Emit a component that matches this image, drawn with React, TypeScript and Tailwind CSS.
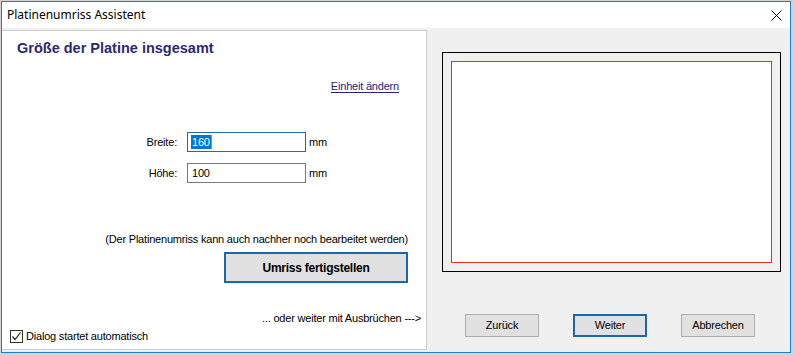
export default function App() {
  return (
    <div className="h-[356px] w-[795px] bg-[#d3d3d3] pl-[1px] pt-[1px] font-['Liberation_Sans',Arial,sans-serif] text-[11px] tracking-[-0.2px] text-black">
      <div className="flex h-[352px] w-[790px] flex-col border border-[#1a7fd0] bg-[#f0f0f0]">
        {/* title bar */}
        <div className="flex h-[26px] items-center justify-between bg-white pl-[5px] pr-[8px]">
          <span className="font-['Noto_Sans',sans-serif] text-[12px] tracking-normal">Platinenumriss Assistent</span>
          <svg width="11" height="11" viewBox="0 0 11 11" className="text-black">
            <path d="M0.5 0.5 L10.5 10.5 M10.5 0.5 L0.5 10.5" stroke="currentColor" strokeWidth="1" />
          </svg>
        </div>

        <div className="flex flex-1 py-[2px]">
          {/* left panel */}
          <div className="flex w-[425px] flex-col border-y border-r border-[#cdcdcd] bg-white">
            <h1 className="ml-[15px] mt-[9px] h-[16px] text-[14.5px] font-bold leading-[16px] tracking-normal text-[#2b2a70]">
              Größe der Platine insgesamt
            </h1>
            <a className="mr-[27px] mt-[24px] self-end leading-[13px] text-[#24247a] underline underline-offset-[2px]">
              Einheit ändern
            </a>

            <div className="mt-[39px] flex items-center">
              <span className="w-[175px] text-right">Breite:</span>
              <div className="ml-[10px] flex h-[20px] w-[119px] items-center border border-[#1f6dab] bg-white pl-[3px]">
                <span className="bg-[#0078d7] px-[1px] leading-[14px] text-white">160</span>
                <span className="h-[14px] w-[1px] bg-[#e8771e]" />
              </div>
              <span className="ml-[3px]">mm</span>
            </div>
            <div className="mt-[11px] flex items-center">
              <span className="w-[175px] text-right">Höhe:</span>
              <div className="ml-[10px] flex h-[20px] w-[119px] items-center border border-[#7a7a7a] bg-white pl-[3px]">
                <span className="px-[1px] leading-[14px]">100</span>
              </div>
              <span className="ml-[3px]">mm</span>
            </div>

            <p className="mr-[18px] mt-[50px] self-end leading-[13px]">
              (Der Platinenumriss kann auch nachher noch bearbeitet werden)
            </p>
            <button className="mr-[18px] mt-[6px] flex h-[31px] w-[184px] items-center justify-center self-end border-2 border-[#1a68a8] bg-[#e1e1e1] text-[12px] font-bold tracking-[-0.25px]">
              Umriss fertigstellen
            </button>

            <p className="mr-[5px] mt-[29px] self-end leading-[13px]">... oder weiter mit Ausbrüchen ---&gt;</p>

            <label className="ml-[8px] mt-[5px] flex items-center gap-[3px] leading-[13px]">
              <span className="flex h-[13px] w-[13px] items-center justify-center border border-[#333333] bg-white">
                <svg width="11" height="11" viewBox="0 0 11 11">
                  <path d="M1.5 5.5 L4 8.5 L9.5 1.5" fill="none" stroke="#222222" strokeWidth="1.2" />
                </svg>
              </span>
              Dialog startet automatisch
            </label>
          </div>

          {/* right area */}
          <div className="flex flex-1 flex-col pl-[15px] pt-[22px]">
            <div className="flex h-[220px] w-[339px] border border-black p-[8px]">
              <div className="flex-1 border border-[#e0321f] bg-white" />
            </div>
            <div className="ml-[23px] mt-[42px] flex gap-[34px]">
              <button className="h-[23px] w-[74px] border border-[#adadad] bg-[#e1e1e1]">Zurück</button>
              <button className="h-[23px] w-[74px] border-2 border-[#1a68a8] bg-[#e1e1e1]">Weiter</button>
              <button className="h-[23px] w-[74px] border border-[#adadad] bg-[#e1e1e1]">Abbrechen</button>
            </div>
          </div>
        </div>
      </div>
    </div>
  )
}
